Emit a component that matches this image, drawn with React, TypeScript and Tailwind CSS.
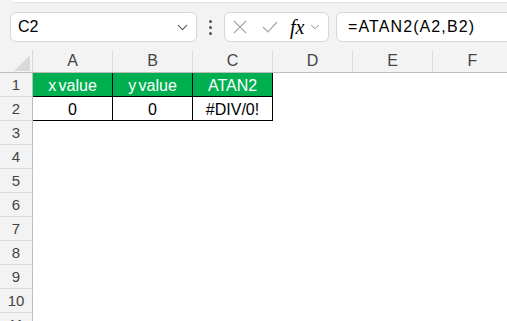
import { ChevronDown } from 'lucide-react';

const cols = ['A', 'B', 'C', 'D', 'E', 'F'];
const rows = [1, 2, 3, 4, 5, 6, 7, 8, 9, 10, 11];

// cell contents for the little table in A1:C2
const data: Record<string, string> = {
  A1: 'x value',
  B1: 'y value',
  C1: 'ATAN2',
  A2: '0',
  B2: '0',
  C2: '#DIV/0!',
};

function Cell({ col, row }: { col: number; row: number }) {
  const key = cols[col] + row;
  const inTable = col < 3 && row < 3;
  if (!inTable) return <div className="h-[24px] w-[80px] shrink-0 bg-white" />;
  const header = row === 1;
  return (
    <div
      className={
        'h-[24px] w-[80px] shrink-0 flex items-center justify-center pt-[2px] border-r border-b border-black text-[16px] [word-spacing:-2px] ' +
        (header ? 'bg-[#00b050] text-white' : 'bg-white text-black')
      }
    >
      {data[key]}
    </div>
  );
}

export default function App() {
  return (
    <div className="w-[507px] h-[321px] overflow-hidden bg-[#f3f3f3] font-['Liberation_Sans',sans-serif] text-[#222]">
      <div className="ml-[12px] h-[3px] bg-white border-b border-[#e3e3e3] rounded-bl-[6px]" />

      {/* formula bar */}
      <div className="flex items-center mt-[9px] pl-[10px] h-[30px]">
        <div className="w-[187px] shrink-0 h-[30px] rounded-[6px] border border-[#d6d6d6] bg-white flex items-center justify-between pl-[7px] pr-[5px]">
          <span className="text-[16px] text-black">C2</span>
          <ChevronDown size={17} strokeWidth={1.5} className="text-[#555]" />
        </div>
        <div className="w-[27px] shrink-0 flex flex-col items-center gap-[3px]">
          <span className="w-[3px] h-[3px] bg-[#555] rounded-full" />
          <span className="w-[3px] h-[3px] bg-[#555] rounded-full" />
          <span className="w-[3px] h-[3px] bg-[#555] rounded-full" />
        </div>
        <div className="w-[105px] shrink-0 h-[30px] rounded-[6px] border border-[#d6d6d6] bg-white flex items-center pl-[7px]">
          <svg width="14" height="14" viewBox="0 0 14 14" className="ml-[1px]">
            <path d="M1 1 L13 13 M13 1 L1 13" stroke="#a8a8a8" strokeWidth="1.2" fill="none" />
          </svg>
          <svg width="16" height="12" viewBox="0 0 16 12" className="ml-[15px]">
            <path d="M1 6 L6 11 L15 1" stroke="#a8a8a8" strokeWidth="1.2" fill="none" />
          </svg>
          <span className="ml-[12px] font-['Liberation_Serif',serif] italic text-[20px] text-black leading-none">fx</span>
          <ChevronDown size={14} strokeWidth={1.5} className="ml-[4px] text-[#777]" />
        </div>
        <div className="ml-[7px] flex-1 h-[30px] mr-[-10px] rounded-l-[6px] border border-[#d6d6d6] bg-white flex items-center pl-[11px]">
          <span className="text-[16px] tracking-[1.1px] text-black">=ATAN2(A2,B2)</span>
        </div>
      </div>

      {/* sheet */}
      <div className="mt-[8px]">
        <div className="flex h-[23px] border-b border-[#bcbcbc]">
          <div className="w-[33px] shrink-0 relative border-r border-[#d8d8d8]">
            <svg width="16" height="16" viewBox="0 0 16 16" className="absolute left-[14px] top-[5px]">
              <polygon points="16,0 16,16 0,16" fill="#d9d9d9" />
            </svg>
          </div>
          {cols.map((c) => (
            <div key={c} className="w-[80px] shrink-0 border-r border-[#dcdcdc] flex items-center justify-center text-[16px] text-[#444]">
              {c}
            </div>
          ))}
        </div>
        {rows.map((r) => (
          <div key={r} className="flex h-[24px]">
            <div className="w-[33px] shrink-0 pt-[2px] border-r border-[#bcbcbc] border-b border-b-[#dadada] flex items-center justify-center text-[15px] text-[#444]">
              {r}
            </div>
            {cols.map((c, i) => (
              <Cell key={c} col={i} row={r} />
            ))}
          </div>
        ))}
      </div>
    </div>
  );
}
